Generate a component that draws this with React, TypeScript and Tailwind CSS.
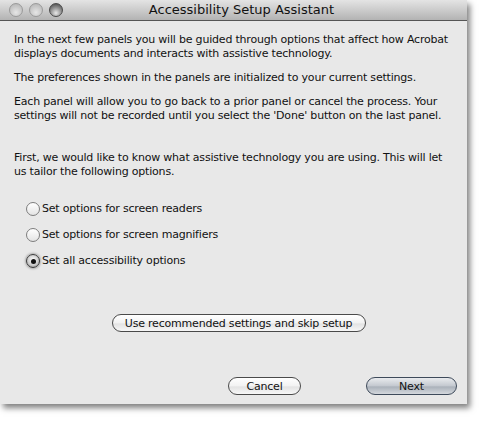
import React from 'react';

const font = { fontFamily: '"DejaVu Sans", "Lucida Grande", Verdana, sans-serif' };

function Light({ active }: { active?: boolean }) {
  return (
    <div
      className={`w-[14px] h-[14px] rounded-full border ${
        active
          ? 'border-[#4a4a4a] bg-[radial-gradient(circle_at_50%_75%,#e8e8e8_0%,#9a9a9a_45%,#3c3c3c_100%)]'
          : 'border-[#9a9a9a] bg-[radial-gradient(circle_at_50%_70%,#e6e6e6_0%,#c8c8c8_55%,#b0b0b0_100%)]'
      }`}
    />
  );
}

function Radio({ label, checked }: { label: string; checked?: boolean }) {
  return (
    <div className="flex items-center gap-[2px] h-[26px]">
      <div
        className={`w-[14px] h-[14px] rounded-full border flex items-center justify-center ${
          checked
            ? 'border-[#3a3a3a] bg-[radial-gradient(circle_at_50%_40%,#ffffff_0%,#c9c9c9_60%,#7a7a7a_100%)] shadow-[0_0_2px_1px_rgba(60,60,60,0.35)]'
            : 'border-[#7d7d7d] bg-[linear-gradient(#ffffff,#e4e4e4)]'
        }`}
      >
        {checked && <div className="w-[5px] h-[5px] rounded-full bg-[#111]" />}
      </div>
      <span>{label}</span>
    </div>
  );
}

function Pill({ children, primary, className = '' }: { children: React.ReactNode; primary?: boolean; className?: string }) {
  return (
    <button
      className={`h-[18px] rounded-full border text-[11px] leading-none tracking-[-0.2px] text-[#111] flex items-center justify-center ${
        primary
          ? 'border-[#3e4a5a] bg-[linear-gradient(#e9ebee_0%,#c3c8cf_50%,#aab1ba_55%,#d4d8dd_100%)]'
          : 'border-[#4a4a4a] bg-[linear-gradient(#ffffff_0%,#f2f2f2_50%,#e3e3e3_55%,#f7f7f7_100%)]'
      } ${className}`}
      style={font}
    >
      {children}
    </button>
  );
}

export default function App() {
  return (
    <div className="w-[493px] h-[423px] bg-white" style={font}>
      <div className="w-[467px] h-[404px] bg-[#e8e8e8] flex flex-col shadow-[3px_4px_6px_rgba(0,0,0,0.5)]">
        {/* title bar */}
        <div className="h-[21px] flex items-center border-b border-[#555] bg-[linear-gradient(#e4e4e4,#b3b3b3)]">
          <div className="flex gap-[6px] pl-[9px]">
            <Light />
            <Light />
            <Light active />
          </div>
          <div className="flex-1 text-center text-[13px] text-[#111] pr-[47px]">Accessibility Setup Assistant</div>
        </div>

        {/* body */}
        <div className="flex-1 flex flex-col pl-[14px] pr-[12px] pt-[12px] text-[11px] leading-[14px] tracking-[-0.2px] text-[#111]">
          <p>
            In the next few panels you will be guided through options that affect how Acrobat displays documents and
            interacts with assistive technology.
          </p>
          <p className="mt-[10px]">The preferences shown in the panels are initialized to your current settings.</p>
          <p className="mt-[10px]">
            Each panel will allow you to go back to a prior panel or cancel the process. Your settings will not be
            recorded until you select the 'Done' button on the last panel.
          </p>
          <p className="mt-[28px]">
            First, we would like to know what assistive technology you are using. This will let us tailor the
            following options.
          </p>
          <div className="mt-[17px] pl-[12px] flex flex-col">
            <Radio label="Set options for screen readers" />
            <Radio label="Set options for screen magnifiers" />
            <Radio label="Set all accessibility options" checked />
          </div>
          <div className="mt-[40px] flex justify-center pl-[8px]">
            <Pill className="w-[254px]">Use recommended settings and skip setup</Pill>
          </div>
        </div>
        <div className="mb-[9px] flex justify-end gap-[65px] pr-[10px]">
          <Pill className="w-[73px]">Cancel</Pill>
          <Pill primary className="w-[91px]">Next</Pill>
        </div>
      </div>
    </div>
  );
}
